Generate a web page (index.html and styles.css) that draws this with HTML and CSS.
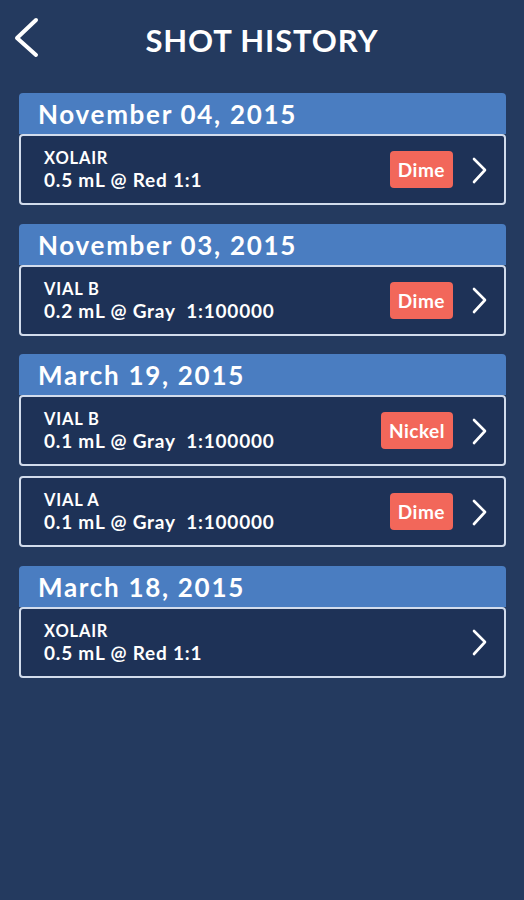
FILE: index.html
```html
<!DOCTYPE html>
<html lang="en">

<head>
    <meta charset="UTF-8">
    <meta name="viewport" content="width=device-width, initial-scale=1.0">
    <title>Shot History</title>
    <link rel="stylesheet" href="styles.css">
</head>

<body>
    <header class="topbar">
        <svg class="back" width="30" height="50" viewBox="0 0 30 50">
            <polyline points="24,8 5,26 24,43" fill="none" stroke="#fff" stroke-width="4" stroke-linecap="round" stroke-linejoin="round"/>
        </svg>
        <h1>SHOT HISTORY</h1>
    </header>

    <main class="history">
        <section class="day">
            <h2 class="day-title">November 04, 2015</h2>
            <div class="shot">
                <div class="shot-info">
                    <div class="shot-name">XOLAIR</div>
                    <div class="shot-dose">0.5 mL @ Red 1:1</div>
                </div>
                <span class="badge">Dime</span>
                <svg class="chev" width="16" height="28" viewBox="0 0 16 28"><polyline points="3,3 14,14 3,26" fill="none" stroke="#fff" stroke-width="2.6" stroke-linecap="round" stroke-linejoin="round"/></svg>
            </div>
        </section>

        <section class="day">
            <h2 class="day-title">November 03, 2015</h2>
            <div class="shot">
                <div class="shot-info">
                    <div class="shot-name">VIAL B</div>
                    <div class="shot-dose">0.2 mL @ Gray&nbsp; 1:100000</div>
                </div>
                <span class="badge">Dime</span>
                <svg class="chev" width="16" height="28" viewBox="0 0 16 28"><polyline points="3,3 14,14 3,26" fill="none" stroke="#fff" stroke-width="2.6" stroke-linecap="round" stroke-linejoin="round"/></svg>
            </div>
        </section>

        <section class="day">
            <h2 class="day-title">March 19, 2015</h2>
            <div class="shot">
                <div class="shot-info">
                    <div class="shot-name">VIAL B</div>
                    <div class="shot-dose">0.1 mL @ Gray&nbsp; 1:100000</div>
                </div>
                <span class="badge">Nickel</span>
                <svg class="chev" width="16" height="28" viewBox="0 0 16 28"><polyline points="3,3 14,14 3,26" fill="none" stroke="#fff" stroke-width="2.6" stroke-linecap="round" stroke-linejoin="round"/></svg>
            </div>
            <div class="shot">
                <div class="shot-info">
                    <div class="shot-name">VIAL A</div>
                    <div class="shot-dose">0.1 mL @ Gray&nbsp; 1:100000</div>
                </div>
                <span class="badge">Dime</span>
                <svg class="chev" width="16" height="28" viewBox="0 0 16 28"><polyline points="3,3 14,14 3,26" fill="none" stroke="#fff" stroke-width="2.6" stroke-linecap="round" stroke-linejoin="round"/></svg>
            </div>
        </section>

        <section class="day">
            <h2 class="day-title">March 18, 2015</h2>
            <div class="shot">
                <div class="shot-info">
                    <div class="shot-name">XOLAIR</div>
                    <div class="shot-dose">0.5 mL @ Red 1:1</div>
                </div>
                <svg class="chev" width="16" height="28" viewBox="0 0 16 28"><polyline points="3,3 14,14 3,26" fill="none" stroke="#fff" stroke-width="2.6" stroke-linecap="round" stroke-linejoin="round"/></svg>
            </div>
        </section>
    </main>
</body>

</html>
```

FILE: styles.css
```css
body {
    font-family: Lato, "Open Sans", sans-serif;
    margin: 0;
    padding: 0;
    background-color: #243a5f;
    color: #fff;
    height: 900px;
}

.topbar {
    position: relative;
    height: 93px;
    display: flex;
    justify-content: center;
}

.topbar h1 {
    margin: 0;
    padding-top: 22px;
    font-size: 31px;
    font-weight: 700;
    letter-spacing: 0.9px;
    line-height: 36px;
}

.back {
    position: absolute;
    left: 12px;
    top: 12px;
}

.history {
    padding: 0 18px 0 19px;
}

.day {
    margin-bottom: 18.5px;
    display: flex;
    flex-direction: column;
    gap: 10px;
}

.day-title {
    margin: 0 0 -10px 0;
    height: 41px;
    line-height: 42px;
    padding-left: 19px;
    background-color: #4a7dc1;
    border-radius: 4px 4px 0 0;
    font-size: 26px;
    font-weight: 700;
    letter-spacing: 1.7px;
}

.shot {
    height: 67px;
    display: flex;
    align-items: center;
    padding: 0 17px 0 23px;
    background-color: #1e3257;
    border: 2px solid #d2dcec;
    border-radius: 4px;
}

.shot-info {
    flex: 1;
}

.shot-name {
    font-size: 16.5px;
    font-weight: 700;
    letter-spacing: 0.8px;
    line-height: 20px;
}

.shot-dose {
    font-size: 19px;
    font-weight: 700;
    letter-spacing: 0.8px;
    line-height: 23px;
}

.badge {
    background-color: #f2675a;
    border-radius: 4px;
    padding: 0 8px;
    height: 37px;
    line-height: 37px;
    font-size: 19px;
    font-weight: 700;
    letter-spacing: 0.5px;
    margin-right: 18px;
}
```
